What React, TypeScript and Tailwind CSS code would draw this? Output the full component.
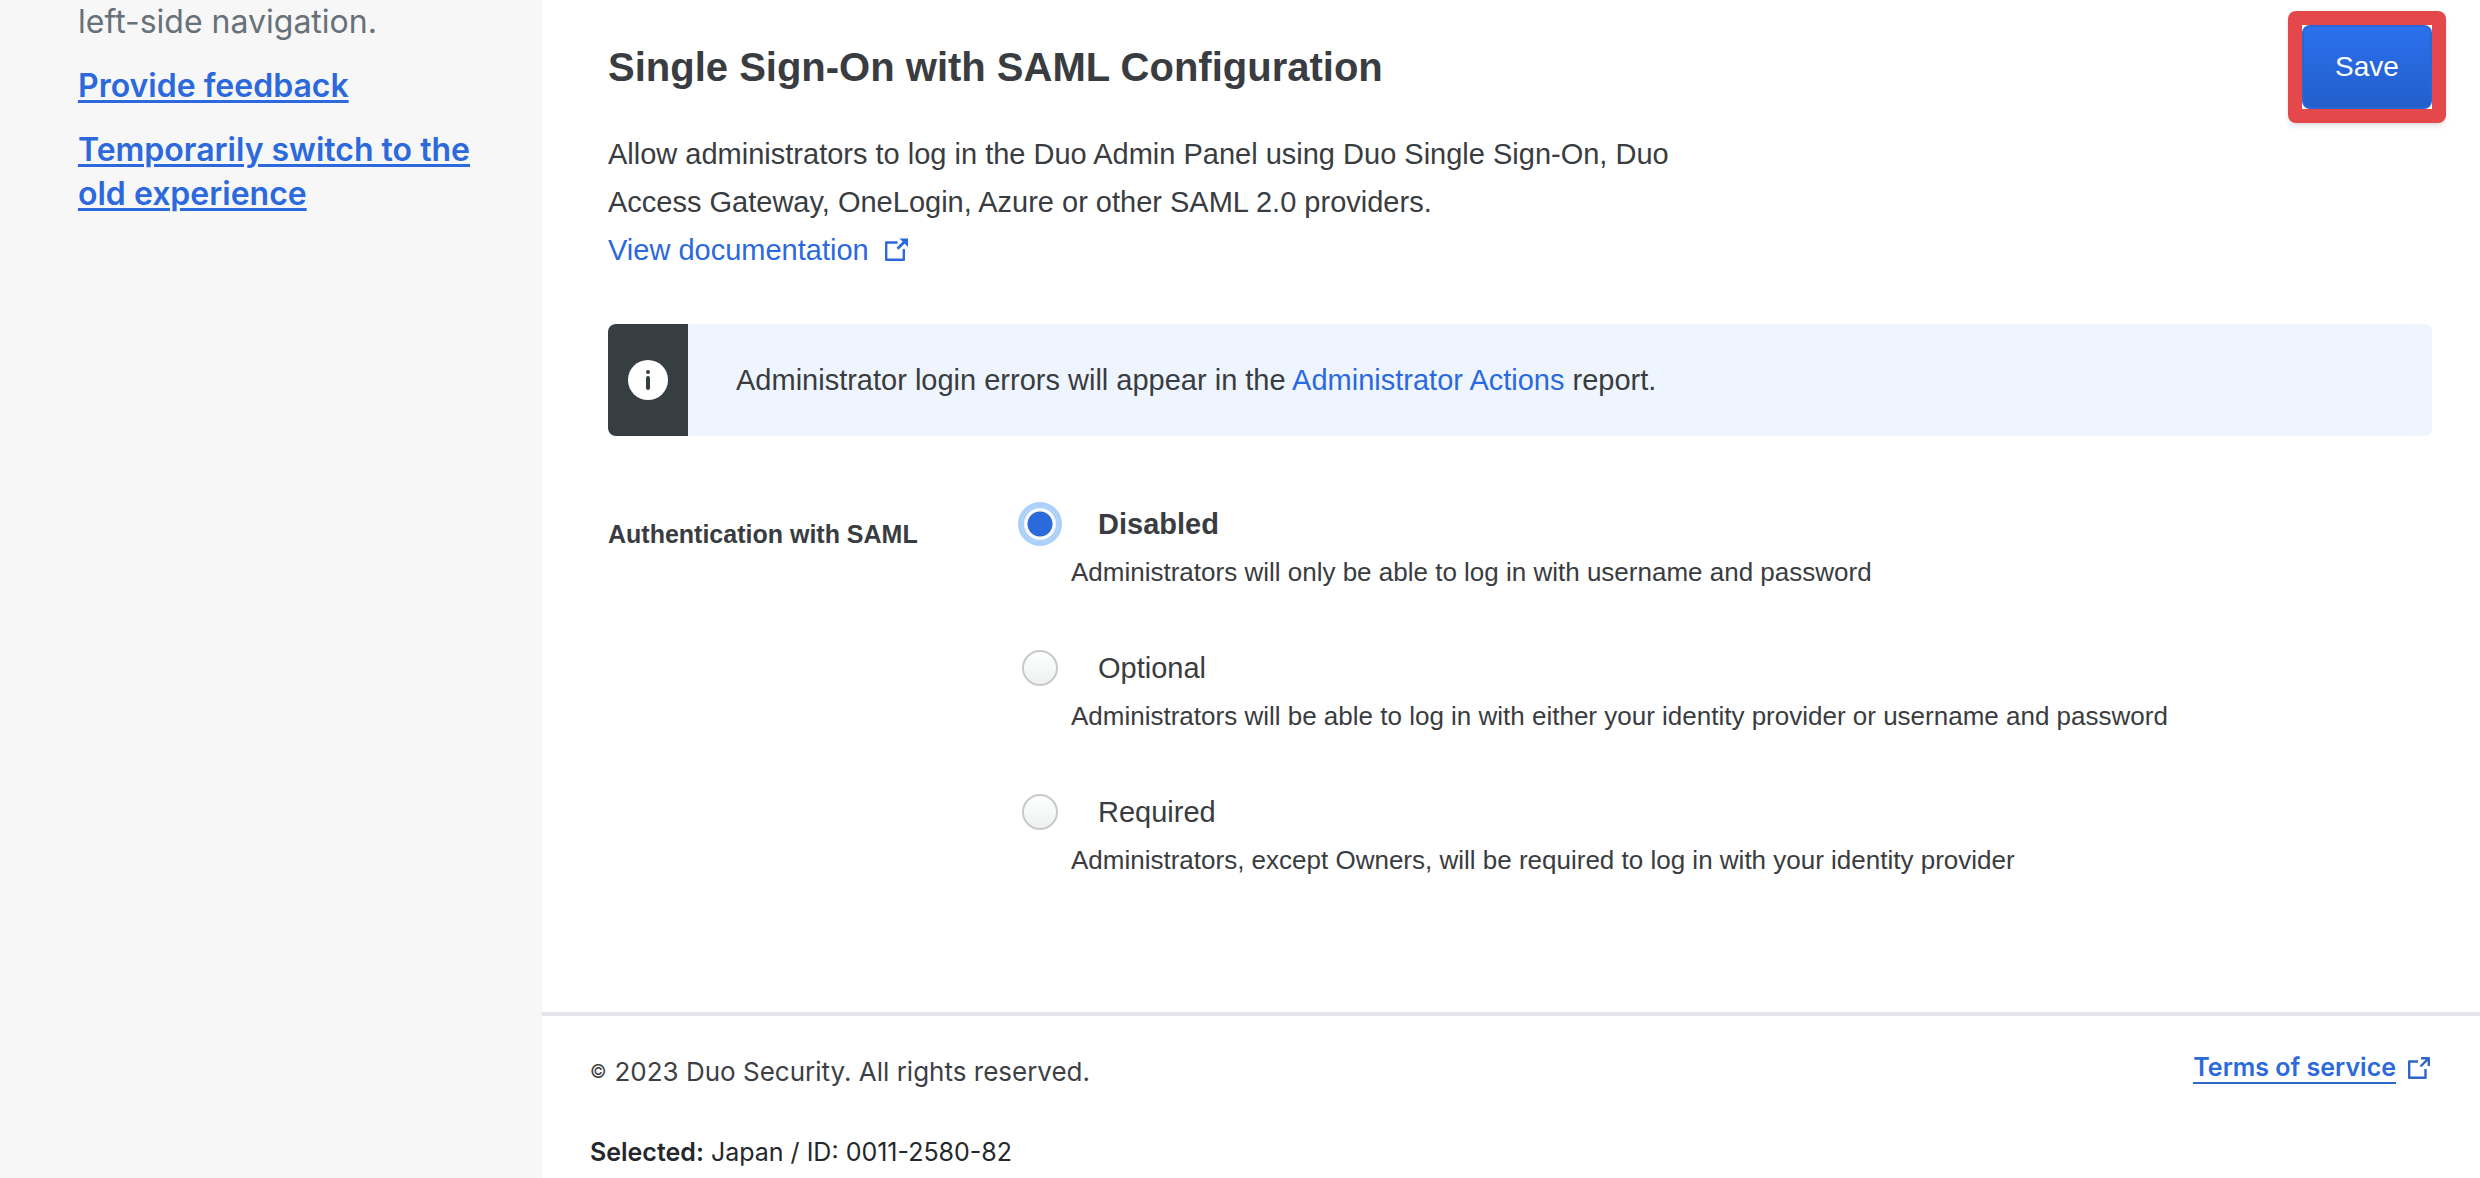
import React, { useState } from 'react';

const OPTIONS = [
  {
    value: 'disabled',
    label: 'Disabled',
    help: 'Administrators will only be able to log in with username and password',
  },
  {
    value: 'optional',
    label: 'Optional',
    help: 'Administrators will be able to log in with either your identity provider or username and password',
  },
  {
    value: 'required',
    label: 'Required',
    help: 'Administrators, except Owners, will be required to log in with your identity provider',
  },
] as const;

type SamlMode = (typeof OPTIONS)[number]['value'];

const DocsIcon = () => (
  <svg width="24" height="24" viewBox="0 0 24 24" fill="none" aria-hidden="true">
    <path
      d="M11.7 4.5H1.2V21.8H18.8V12"
      stroke="currentColor"
      strokeWidth="2.4"
      strokeLinejoin="round"
      strokeLinecap="round"
    />
    <path d="M12.5 10.8L20 3.3" stroke="currentColor" strokeWidth="2.8" />
    <path d="M14.5 0.5H23V9Z" fill="currentColor" />
  </svg>
);

const ExternalIcon = () => (
  <svg width="22" height="22" viewBox="0 0 22 22" fill="none" aria-hidden="true">
    <path
      d="M10 4.5H1.2V20.8H17.5V12M13 1.2H20.8V9M20.8 1.2L12.5 9.5"
      stroke="#2f67c8"
      strokeWidth="2.4"
      strokeLinejoin="round"
    />
  </svg>
);

const InfoIcon = () => (
  <svg width="40" height="40" viewBox="0 0 40 40" aria-hidden="true">
    <circle cx="20" cy="20" r="20" fill="#fff" />
    <circle cx="20" cy="12" r="2" fill="#373e41" />
    <path d="M20 18V28" stroke="#373e41" strokeWidth="4" strokeLinecap="round" />
  </svg>
);

const Sidebar = () => (
  <aside className="w-[542px] shrink-0 bg-[#f7f7f7] pr-14 pl-[78px] font-[Inter,sans-serif] text-[32px] leading-[44px]">
    <p className="text-[#67717a]">left-side navigation.</p>
    <a href="#feedback" className="mt-5 block font-semibold text-[#2b69dc] underline decoration-[3px] underline-offset-[3px]">
      Provide feedback
    </a>
    <a href="#old" className="mt-5 block font-semibold text-[#2b69dc] underline decoration-[3px] underline-offset-[3px]">
      Temporarily switch to the old experience
    </a>
  </aside>
);

const SamlForm: React.FC = () => {
  const [mode, setMode] = useState<SamlMode>('disabled');

  return (
    <fieldset className="mt-16 grid grid-cols-[410px_1fr]">
      <legend className="float-left w-[410px] pt-4 text-[25px] leading-[36px] font-bold">Authentication with SAML</legend>
      <div className="col-start-2 flex flex-col gap-12">
        {OPTIONS.map((option) => (
          <div key={option.value}>
            <div className="flex h-12 items-center gap-10">
              <input
                type="radio"
                id={`saml-${option.value}`}
                name="saml"
                checked={mode === option.value}
                onChange={() => setMode(option.value)}
                aria-describedby={`saml-${option.value}-help`}
                className="ml-1 size-9 shrink-0 appearance-none rounded-full border-2 border-[#c8c9ca] bg-linear-to-b from-white to-[#eff1f1] outline-none checked:border-[#a9cffb] checked:bg-[radial-gradient(circle,#2b69dc_12px,#fafafa_13px)] checked:shadow-[0_0_0_4px_#a9cffb]"
              />
              <label
                htmlFor={`saml-${option.value}`}
                className={mode === option.value ? 'font-bold' : ''}
              >
                {option.label}
              </label>
            </div>
            <p id={`saml-${option.value}-help`} className="pl-[53px] text-[26px] leading-[48px]">
              {option.help}
            </p>
          </div>
        ))}
      </div>
    </fieldset>
  );
};

const Footer = () => (
  <footer className="flex items-start justify-between border-t-4 border-[#e3e4e7] pr-[50px] pl-12 font-[Inter,sans-serif]">
    <div className="flex flex-col gap-10 pt-9">
      <p className="flex items-center gap-2 text-[26px] leading-[40px] text-[#3c4045]">
        <small className="text-lg">©</small>
        2023 Duo Security. All rights reserved.
      </p>
      <p className="text-[25px] leading-[40px] text-[#24282c]">
        <strong className="font-semibold">Selected:</strong> Japan / ID: 0011-2580-82
      </p>
    </div>
    <a href="#terms" className="mt-9 flex items-center gap-3 text-[25px] leading-[30px] font-semibold text-[#2b69dc]">
      <span className="border-b-2 border-[#2f67c8]">Terms of service</span>
      <ExternalIcon />
    </a>
  </footer>
);

export default function App() {
  return (
    <div className="flex min-h-screen overflow-hidden bg-white font-['Liberation_Sans',Arial,sans-serif] text-[29px] leading-[48px] text-[#393c40]">
      <Sidebar />
      <div className="flex min-w-0 flex-1 flex-col">
        <main className="pr-12 pb-32 pl-[66px]">
          <div className="flex items-start justify-between pt-[11px]">
            <h1 className="pt-8 text-[40px] leading-[48px] font-bold">Single Sign-On with SAML Configuration</h1>
            <div className="-mr-[14px] rounded-lg bg-[#e5484a] p-[14px] shadow-md">
              <div className="bg-white">
                <button
                  type="button"
                  className="block h-[84px] w-[130px] rounded-lg border-2 border-[#2866d6] bg-linear-to-b from-[#2c70ee] to-[#225fcb] text-[28px] text-white"
                >
                  Save
                </button>
              </div>
            </div>
          </div>
          <p className="mt-[7px] max-w-[1100px]">
            Allow administrators to log in the Duo Admin Panel using Duo Single Sign-On, Duo Access Gateway, OneLogin,
            Azure or other SAML 2.0 providers.
          </p>
          <a href="#docs" className="flex w-fit items-center gap-4 text-[#2b69dc]">
            View documentation
            <DocsIcon />
          </a>
          <div className="mt-[50px] flex h-28 overflow-hidden rounded-lg bg-[#eef5fe]">
            <div className="flex w-20 items-center justify-center bg-[#373e41]">
              <InfoIcon />
            </div>
            <p className="flex-1 self-center px-12">
              Administrator login errors will appear in the{' '}
              <a href="#actions" className="text-[#2b69dc]">
                Administrator Actions
              </a>{' '}
              report.
            </p>
          </div>
          <SamlForm />
        </main>
        <Footer />
      </div>
    </div>
  );
}
